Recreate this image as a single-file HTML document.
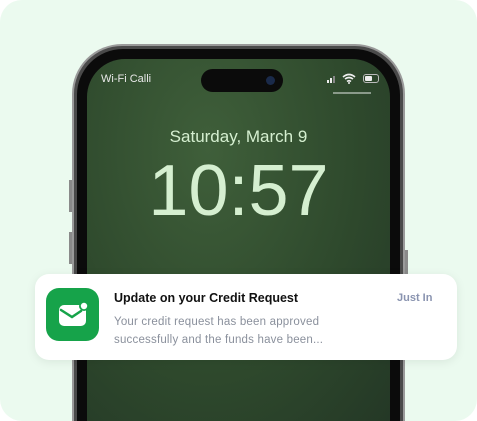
<!DOCTYPE html>
<html><head><style>
*{margin:0;padding:0;box-sizing:border-box}
html,body{width:477px;height:421px;overflow:hidden}
body{background:#fff;position:relative;font-family:"Liberation Sans",sans-serif}
.card{position:absolute;left:0;top:0;width:477px;height:421px;background:#ebfaef;border-radius:22px}
.phone{position:absolute;left:72px;top:44px;width:333px;height:377px;border-radius:50px 50px 0 0;background:#4a4a4a;border:2px solid #9a9a9a;border-bottom:none}
.bezel{position:absolute;left:3px;top:3px;right:3px;bottom:0;border-radius:46px 46px 0 0;background:#0b0b0b}
.screen{position:absolute;left:10px;top:10px;right:10px;bottom:0;border-radius:38px 38px 0 0;background:radial-gradient(ellipse at 40% 25%,#3f5f3a 0%,#2f4a2d 55%,#243826 100%);overflow:hidden}
.island{position:absolute;left:114px;top:10px;width:82px;height:23px;border-radius:12px;background:#0b0b0b}
.btn{position:absolute;background:#8a8a8a;width:3px}
.txt{position:absolute;color:#d5efd0}
.notif{position:absolute;left:35px;top:274px;width:422px;height:86px;background:#fff;border-radius:14px;box-shadow:0 2px 10px rgba(0,0,0,.08)}
.icon{position:absolute;left:11px;top:14px;width:53px;height:53px;border-radius:13px;background:#16a34a}
</style></head><body>
<div class="card"></div>
<div class="btn" style="left:69px;top:180px;height:32px"></div>
<div class="btn" style="left:69px;top:232px;height:32px"></div>
<div class="btn" style="left:405px;top:250px;height:45px"></div>
<div class="phone"><div class="bezel"><div class="screen">
<div class="island"><div style="position:absolute;right:8px;top:7px;width:9px;height:9px;border-radius:50%;background:#1a2a4a"></div></div>
<div class="txt" style="left:14px;top:14px;font-size:11px;color:#e8e8e8">Wi-Fi Calli</div>
<div style="position:absolute;left:240px;top:21px;width:2px;height:3px;background:#eee"></div>
<div style="position:absolute;left:243px;top:19px;width:2px;height:5px;background:#eee"></div>
<div style="position:absolute;left:246px;top:17px;width:2px;height:7px;background:#888"></div>
<svg style="position:absolute;left:255px;top:14px" width="14" height="11" viewBox="0 0 14 11"><path d="M1 4Q7-1 13 4M3 6Q7 3 11 6M5 8.5Q7 7 9 8.5" stroke="#eee" stroke-width="1.6" fill="none"/><circle cx="7" cy="10" r="1" fill="#eee"/></svg>
<div style="position:absolute;left:276px;top:15px;width:16px;height:9px;border:1px solid #bbb;border-radius:3px"><div style="width:7px;height:5px;margin:1px;background:#eee;border-radius:1px"></div></div>
<div style="position:absolute;left:246px;top:33px;width:38px;height:1.5px;background:#8a9a8a"></div>
<div class="txt" style="left:0;width:100%;text-align:center;top:68px;font-size:17px">Saturday, March 9</div>
<div class="txt" style="left:0;width:100%;text-align:center;top:91px;font-size:72px;letter-spacing:0px">10:57</div>
</div></div></div>
<div class="notif">
<div class="icon"><svg width="53" height="53" viewBox="0 0 53 53"><rect x="13" y="17" width="27" height="21" rx="5" fill="#fff"/><path d="M15 22l11 7 9-6" stroke="#16a34a" stroke-width="2.5" fill="none" stroke-linecap="round"/><circle cx="38" cy="18" r="5" fill="#16a34a"/><circle cx="38" cy="18" r="3.2" fill="#fff"/></svg></div>
<div style="position:absolute;left:79px;top:17px;font-size:12.5px;font-weight:bold;color:#111">Update on your Credit Request</div>
<div style="position:absolute;left:362px;top:18px;font-size:11px;font-weight:bold;color:#8a94b0">Just In</div>
<div style="position:absolute;left:79px;top:39px;font-size:11.5px;line-height:18px;color:#8a909c;letter-spacing:.2px">Your credit request has been approved<br>successfully and the funds have been...</div>
</div>
</body></html>
